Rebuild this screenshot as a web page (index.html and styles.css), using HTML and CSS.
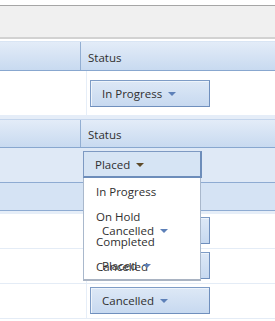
FILE: index.html
```html
<!DOCTYPE html>
<html>
<head>
<meta charset="utf-8">
<title>Status grid</title>
<link rel="stylesheet" href="styles.css">
</head>
<body>

<div class="toolbar"></div>

<div class="grid grid_top">
	<div class="hdr">
		<div class="c1"></div>
		<div class="c2">Status</div>
	</div>
	<div class="row row_tall">
		<div class="c1 c1_line"></div>
		<div class="c2">
			<div class="btn"><span class="lbl">In Progress <i class="arr"></i></span></div>
		</div>
	</div>
</div>

<div class="band"></div>

<div class="grid grid_bot">
	<div class="hdr hdr_small">
		<div class="c1"></div>
		<div class="c2">Status</div>
	</div>
	<div class="row row_edit">
		<div class="c1 c1_edit"></div>
		<div class="c2">
			<div class="dd">
				<div class="btn btn_open"><span class="lbl">Placed <i class="arr arr_dark"></i></span></div>
				<!-- open list, drawn under the button labels of the rows below -->
				<ul class="dd_list">
					<li>In Progress</li>
					<li>On Hold</li>
					<li>Completed</li>
					<li>Cancelled</li>
				</ul>
			</div>
		</div>
	</div>
	<div class="row row_sel"></div>
	<div class="band band_sel"></div>
	<div class="row">
		<div class="c1 c1_line"></div>
		<div class="c2"><div class="btn"><span class="lbl">Cancelled <i class="arr"></i></span></div></div>
	</div>
	<div class="row">
		<div class="c1 c1_line"></div>
		<div class="c2"><div class="btn"><span class="lbl">Placed <i class="arr"></i></span></div></div>
	</div>
	<div class="row">
		<div class="c1 c1_line"></div>
		<div class="c2"><div class="btn"><span class="lbl">Cancelled <i class="arr"></i></span></div></div>
	</div>
</div>

</body>
</html>
```

FILE: styles.css
```css
html, body {
	margin: 0px;
	padding: 0px;
	background: #fff;
	overflow: hidden;
}
body {
	font-family: "Open Sans", "Noto Sans", sans-serif;
	font-size: 11.5px;
	color: #2f2f2f;
}
.toolbar {
	margin-top: 5px;
	height: 31px;
	border-top: 1px solid #a6a6a6;
	border-bottom: 2px solid #d2d2d2;
	background: #f0f0f0;
}
.grid {
	display: flex;
	flex-direction: column;
}
.grid_top {
	margin-top: 2px;
}
.hdr {
	display: flex;
	height: 28px;
	border-top: 1px solid #d9e5f4;
	border-bottom: 1px solid #88a7cf;
	background: linear-gradient(#e3ecf8, #c8daf0);
}
.hdr_small {
	height: 27px;
	border-top: none;
}
.hdr .c1 {
	width: 80px;
	border-right: 1px solid #92aed2;
}
.hdr .c2 {
	flex: 1;
	padding: 2px 0 0 7px;
	line-height: 28px;
}
.hdr_small .c2 {
	padding-top: 1px;
	line-height: 27px;
}
.row {
	display: flex;
	height: 34px;
	border-bottom: 1px solid #e4ecf6;
}
.row_tall {
	height: 44px;
	border-bottom: none;
}
.c1 {
	width: 86px;
	flex: none;
}
.c1_line {
	border-right: 1px solid #e6eef8;
}
.c2 {
	flex: 1;
	padding: 3px 0 0 3px;
}
.row_tall .c2 {
	padding-top: 9px;
}
.band {
	height: 4px;
	background: #e5edf8;
	border-bottom: 1px solid #c4d5ec;
}
.band_sel {
	height: 3px;
	border-bottom: none;
	background: #e6eef8;
}
.row_edit {
	height: 34px;
	background: #dfe9f6;
	border-bottom: 1px solid #8eabd2;
}
.row_edit .c2 {
	padding: 3px 0 0 0;
}
.c1_edit {
	width: 83px;
}
.row_sel {
	height: 27px;
	background: #d5e3f4;
	border-bottom: 1px solid #8eabd2;
}
.btn {
	box-sizing: border-box;
	width: 120px;
	height: 27px;
	border: 1px solid #7e9cc6;
	border-right-color: #6f8fbd;
	border-bottom-color: #6f8fbd;
	box-shadow: inset 1px 1px 0 #eef4fb;
	background: linear-gradient(#dde8f6, #c7d9f0);
	padding-left: 11px;
	line-height: 25px;
	white-space: nowrap;
}
.lbl {
	position: relative;
	z-index: 2;
}
.arr {
	display: inline-block;
	width: 0;
	height: 0;
	margin-left: 3px;
	vertical-align: 2px;
	border-left: 4px solid transparent;
	border-right: 4px solid transparent;
	border-top: 4px solid #5d80b8;
}
.arr_dark {
	border-top-color: #5e4a28;
}
.dd {
	position: relative;
	width: 119px;
}
.btn_open {
	width: 119px;
	height: 27px;
	background: #d6e4f4;
	box-shadow: none;
	border-color: #7d99c2;
	border-right: 2px solid #6d8dba;
	border-bottom: 2px solid #6d8dba;
}
.dd_list {
	position: absolute;
	z-index: 1;
	left: 0px;
	top: 27px;
	box-sizing: border-box;
	width: 118px;
	margin: 0;
	padding: 1px 0 0 12px;
	list-style: none;
	background: #fff;
	border: 1px solid #a9b8cc;
	border-top: none;
	border-bottom: 2px solid #a9b3c2;
}
.dd_list li {
	line-height: 25px;
	height: 25px;
}
```
